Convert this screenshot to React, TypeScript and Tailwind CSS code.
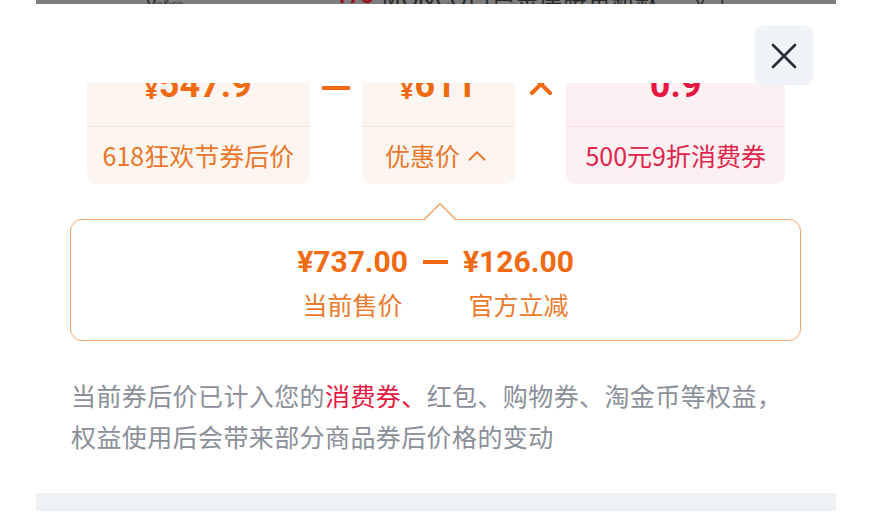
import { ChevronUp } from "lucide-react";

const cjk = "font-['Noto_Sans_CJK_SC',sans-serif]";
const num = "font-['Roboto',sans-serif] font-bold";

const PriceCard = ({
  value,
  label,
  width,
  tone,
  chevron,
}: {
  value: string;
  label: string;
  width: string;
  tone: "orange" | "red";
  chevron?: boolean;
}) => {
  const isRed = tone === "red";
  return (
    <div
      className={`${width} flex flex-col rounded-b-[10px] ${
        isRed ? "bg-[#fdf0f2]" : "bg-[#fdf5ef]"
      }`}
    >
      {/* big number, mostly scrolled out of view */}
      <div
        className={`h-[67px] flex items-end justify-center pb-[23px] ${num} text-[36px] leading-none ${
          isRed ? "text-[#e5173f]" : "text-[#f06a12]"
        }`}
      >
        {value.startsWith("¥") ? (
          <>
            <span className="text-[24px] mr-[1px]">¥</span>
            <span>{value.slice(1)}</span>
          </>
        ) : (
          value
        )}
      </div>
      {/* label */}
      <div
        className={`h-[58px] flex items-center justify-center gap-[2px] border-t ${
          isRed
            ? "border-[#f7dde2] text-[#e0254b]"
            : "border-[#f8e5d7] text-[#e9772b]"
        } text-[25px]`}
      >
        <span>{label}</span>
        {chevron && <ChevronUp size={30} strokeWidth={1.5} />}
      </div>
    </div>
  );
};

const App = () => {
  return (
    <div className={`w-[878px] h-[531px] bg-white overflow-hidden ${cjk}`}>
      <div className="ml-[36px] w-[800px] flex flex-col">
        {/* dimmed page behind the sheet */}
        <div className="h-[4px] bg-[#7c7c7c] overflow-hidden flex items-end">
          <span className="ml-[110px] text-[12px] leading-none text-[#2a2a2a] font-['Liberation_Serif',serif] mb-[-6px]">
            Mo&amp;co.
          </span>
          <span className={`ml-[150px] text-[22px] leading-none text-[#9b1022] ${num} mb-[-3px]`}>
            ¥78
          </span>
          <span className="ml-[8px] text-[24px] leading-none text-[#2a2a2a] mb-[-5px] whitespace-nowrap">
            MO&amp;CO白色金属腰带新款
          </span>
          <span className="ml-[30px] text-[22px] leading-none text-[#2a2a2a] mb-[-4px]">∨↑</span>
        </div>

        {/* sheet */}
        <div className="relative h-[527px] bg-white rounded-t-[16px] flex flex-col">
          <div className="h-[79px] shrink-0" />

          <button className="absolute top-[22px] right-[23px] w-[58px] h-[59px] rounded-[8px] bg-[#eff2f6] flex items-center justify-center z-10">
            <svg width="26" height="26" viewBox="0 0 26 26" fill="none">
              <path
                d="M2 2L24 24M24 2L2 24"
                stroke="#262b36"
                strokeWidth="2.6"
                strokeLinecap="round"
              />
            </svg>
          </button>

          {/* scrolled content */}
          <div className="h-[410px] shrink-0 overflow-hidden">
            <div className="-mt-[24px] flex flex-col">
              {/* formula row */}
              <div className="flex mx-[51px]">
                <PriceCard value="¥547.9" label="618狂欢节券后价" width="w-[223px]" tone="orange" />
                <div className="w-[52px] h-[67px] flex justify-center">
                  <div className="mt-[27px] w-[28px] h-[4px] bg-[#f06a12]" />
                </div>
                <PriceCard value="¥611" label="优惠价" width="w-[154px]" tone="orange" chevron />
                <div className="w-[51px] h-[67px] flex justify-center">
                  <svg width="24" height="24" viewBox="0 0 24 24" className="mt-[13px]">
                    <path
                      d="M3 3L21 21M21 3L3 21"
                      stroke="#f06a12"
                      strokeWidth="4"
                      strokeLinecap="round"
                    />
                  </svg>
                </div>
                <PriceCard value="0.9" label="500元9折消费券" width="w-[219px]" tone="red" />
              </div>

              {/* breakdown bubble */}
              <div className="relative mt-[35px] ml-[34px] mr-[35px] h-[122px] border-[1.5px] border-[#f3a46d] rounded-[12px] flex justify-center pt-[24px]">
                <svg
                  width="32"
                  height="18"
                  viewBox="0 0 32 18"
                  className="absolute top-[-17px] left-[353px]"
                >
                  <polygon points="0,18 16,1 32,18" fill="white" />
                  <polyline
                    points="0,16.8 16,0.8 32,16.8"
                    fill="none"
                    stroke="#f3a46d"
                    strokeWidth="1.5"
                  />
                </svg>
                <div className="flex flex-col items-center">
                  <div className={`${num} text-[30px] leading-[36px] text-[#f06a12]`}>¥737.00</div>
                  <div className="mt-[6px] text-[25px] leading-[36px] text-[#ec7a2d]">当前售价</div>
                </div>
                <div className="w-[55px] h-[36px] flex items-center justify-center">
                  <div className="w-[25px] h-[3.5px] bg-[#f06a12]" />
                </div>
                <div className="flex flex-col items-center">
                  <div className={`${num} text-[30px] leading-[36px] text-[#f06a12]`}>¥126.00</div>
                  <div className="mt-[6px] text-[25px] leading-[36px] text-[#ec7a2d]">官方立减</div>
                </div>
              </div>

              {/* note */}
              <p className="mt-[34px] ml-[35px] text-[25px] leading-[41px] tracking-[0.4px] text-[#8a8f99] whitespace-nowrap">
                当前券后价已计入您的<span className="text-[#e5173f]">消费券、</span>
                红包、购物券、淘金币等权益，
                <br />
                权益使用后会带来部分商品券后价格的变动
              </p>
            </div>
          </div>

          <div className="h-[18px] shrink-0 bg-[#eff2f5]" />
          <div className="flex-1 bg-white" />
        </div>
      </div>
    </div>
  );
};

export default App;
